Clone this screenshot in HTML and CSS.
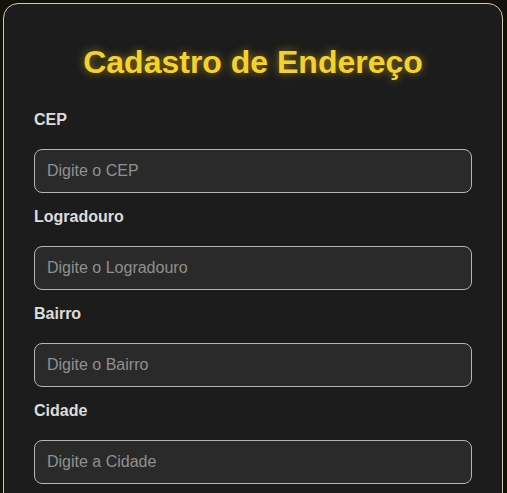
FILE: index.html
```html
<!DOCTYPE html>
<html lang="pt-BR">
<head>
<meta charset="utf-8">
<title>Cadastro de Endereço</title>
<link rel="stylesheet" href="styles.css">
</head>
<body>
<div class="card">
  <h1 class="title">Cadastro de Endereço</h1>
  <form class="form">
    <div class="field">
      <label class="label" for="cep">CEP</label>
      <input class="input" id="cep" type="text" placeholder="Digite o CEP">
    </div>
    <div class="field">
      <label class="label" for="logradouro">Logradouro</label>
      <input class="input" id="logradouro" type="text" placeholder="Digite o Logradouro">
    </div>
    <div class="field">
      <label class="label" for="bairro">Bairro</label>
      <input class="input" id="bairro" type="text" placeholder="Digite o Bairro">
    </div>
    <div class="field">
      <label class="label" for="cidade">Cidade</label>
      <input class="input" id="cidade" type="text" placeholder="Digite a Cidade">
    </div>
  </form>
</div>
</body>
</html>
```
FILE: styles.css
```css
* { box-sizing: border-box; }
html, body { margin: 0; padding: 0; }
body {
  background: #14110a;
  font-family: "Liberation Sans", Arial, sans-serif;
  padding: 3px 4px 0 3px;
}
.card {
  width: 500px;
  background: #1c1c1c;
  border: 1px solid #d2cba9;
  border-radius: 15px;
  padding: 40px 30px 30px;
}
.title {
  margin: 0 0 30px;
  text-align: center;
  font-size: 32px;
  font-weight: bold;
  color: #f5d22b;
  text-shadow: 0 0 8px rgba(245, 200, 30, 0.55);
}
.form {
  display: flex;
  flex-direction: column;
  gap: 15px;
}
.field {
  display: flex;
  flex-direction: column;
  gap: 20px;
}
.label {
  font-size: 16px;
  font-weight: bold;
  color: #dcdcdc;
}
.input {
  width: 100%;
  font-family: "Liberation Sans", Arial, sans-serif;
  font-size: 16px;
  padding: 12px;
  background: #2a2a2a;
  border: 1px solid #b5b5b5;
  border-radius: 8px;
  color: #eee;
  outline: none;
}
.input::placeholder { color: #909090; }
```
